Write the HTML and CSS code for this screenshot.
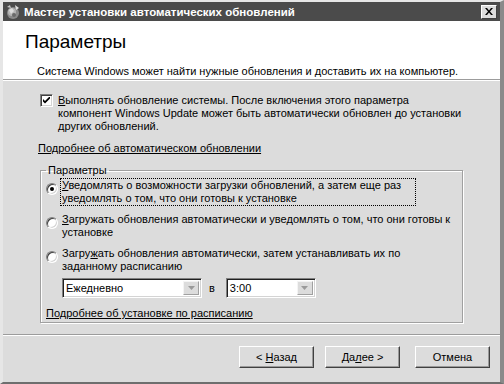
FILE: index.html
```html
<!DOCTYPE html>
<html lang="ru">
<head>
<meta charset="utf-8">
<link rel="stylesheet" href="styles.css">
</head>
<body>
<div class="window">
  <div class="titlebar">
    <svg class="appicon" width="16" height="16" viewBox="0 0 16 16">
      <circle cx="8" cy="9" r="6" fill="#8a8a8a"/>
      <circle cx="7" cy="8" r="4" fill="#b5b5b5"/>
      <path d="M4 6 L7 4 L9 7 L6 10 Z" fill="#dcdcdc"/>
      <path d="M10 1 L14 4 L11 6 Z" fill="#e0e0e0"/>
      <path d="M2 3 L5 1 L6 4 Z" fill="#c8c8c8"/>
      <circle cx="9" cy="11" r="2" fill="#6a6a6a"/>
    </svg>
    <span class="title">Мастер установки автоматических обновлений</span>
    <span class="close">
      <svg width="8" height="7" viewBox="0 0 8 7"><path d="M0 0h2l2 2.5 2-2.5h2L5 3.5 8 7H6L4 4.5 2 7H0l3-3.5z" fill="#000"/></svg>
    </span>
  </div>
  <div class="header">
    <h1 class="heading">Параметры</h1>
    <p class="desc">Система Windows может найти нужные обновления и доставить их на компьютер.</p>
  </div>
  <div class="content">
    <div class="check-row">
      <span class="checkbox">
        <svg width="7" height="7" viewBox="0 0 7 7"><path d="M0 2 L2 4 L7 -1 L7 1.5 L2 6.5 L0 4.5 Z" fill="#000"/></svg>
      </span>
      <span class="check-text"><u>В</u>ыполнять обновление системы. После включения этого параметра<br>компонент Windows Update может быть автоматически обновлен до установки<br>других обновлений.</span>
    </div>
    <a class="link link-auto">Подробнее об автоматическом обновлении</a>
    <fieldset class="group">
      <legend class="legend">Параметры</legend>
      <div class="radio-row">
        <span class="radio on"><span class="dot"></span></span>
        <span class="radio-text focus"><u>У</u>ведомлять о возможности загрузки обновлений, а затем еще раз уведомлять о том, что они готовы к установке</span>
      </div>
      <div class="radio-row">
        <span class="radio"></span>
        <span class="radio-text"><u>З</u>агружать обновления автоматически и уведомлять о том, что они готовы к установке</span>
      </div>
      <div class="radio-row">
        <span class="radio"></span>
        <span class="radio-text">Загру<u>ж</u>ать обновления автоматически, затем устанавливать их по заданному расписанию</span>
      </div>
      <div class="combo-row">
        <span class="combo combo-day"><span class="combo-value">Ежедневно</span><span class="combo-btn"><svg width="7" height="4" viewBox="0 0 7 4"><path d="M0 0h7L3.5 4z" fill="#9a9a9a"/></svg></span></span>
        <span class="at">в</span>
        <span class="combo combo-time"><span class="combo-value">3:00</span><span class="combo-btn"><svg width="7" height="4" viewBox="0 0 7 4"><path d="M0 0h7L3.5 4z" fill="#9a9a9a"/></svg></span></span>
      </div>
      <a class="link link-sched">Подробнее об установке по расписанию</a>
    </fieldset>
  </div>
  <div class="footer">
    <button class="btn"><span>&lt; <u>Н</u>азад</span></button>
    <button class="btn"><span>Да<u>л</u>ее &gt;</span></button>
    <button class="btn btn-cancel"><span>Отмена</span></button>
  </div>
</div>
</body>
</html>
```
FILE: styles.css
```css
* { box-sizing: border-box; }
html, body { margin: 0; padding: 0; }
body {
  width: 504px;
  height: 384px;
  background: #dcdcdc;
  font-family: "Liberation Sans", Arial, sans-serif;
  font-size: 11px;
  color: #000;
  overflow: hidden;
}
.window {
  width: 504px;
  height: 384px;
  display: flex;
  flex-direction: column;
  background: #dcdcdc;
  border-top: 2px solid #e6e6e6;
  border-left: 3px solid #e6e6e6;
  border-right: 4px solid #8a8a8a;
  border-bottom: 2px solid #6e6e6e;
}
.titlebar {
  height: 19px;
  flex: none;
  background: #4b4b4b;
  display: flex;
  align-items: center;
  padding: 0 3px 0 2px;
}
.appicon { flex: none; margin-right: 3px; }
.title {
  color: #fff;
  font-weight: bold;
  font-size: 11.5px;
  flex: 1;
  white-space: nowrap;
}
.close {
  width: 16px;
  height: 14px;
  background: #dcdcdc;
  border-top: 1px solid #fff;
  border-left: 1px solid #fff;
  border-right: 1px solid #404040;
  border-bottom: 1px solid #404040;
  display: flex;
  align-items: center;
  justify-content: center;
}
.header {
  height: 59px;
  flex: none;
  background: #fff;
  border-bottom: 1px solid #9c9c9c;
  box-shadow: 0 1px 0 #fff;
  padding: 9px 0 0 22px;
}
.heading {
  margin: 0;
  font-weight: normal;
  font-size: 19px;
  line-height: 24px;
}
.desc {
  margin: 11px 0 0 12px;
  line-height: 13px;
}
.content {
  flex: 1;
  padding: 14px 0 0 34px;
}
.check-row {
  display: flex;
  align-items: flex-start;
  padding-left: 3px;
  width: 440px;
}
.checkbox {
  flex: none;
  width: 13px;
  height: 13px;
  background: #fff;
  border-top: 1px solid #808080;
  border-left: 1px solid #808080;
  border-right: 1px solid #fff;
  border-bottom: 1px solid #fff;
  box-shadow: inset 1px 1px 0 #404040, inset -1px -1px 0 #d4d4d4;
  display: flex;
  align-items: center;
  justify-content: center;
}
.check-text {
  margin-left: 5px;
  line-height: 13px;
  white-space: nowrap;
}
.link {
  display: block;
  color: #000;
  text-decoration: underline;
  line-height: 13px;
  cursor: pointer;
}
.link-auto { margin-top: 9px; margin-left: 1px; }
.group {
  margin: 9px 0 0 3px;
  width: 423px;
  height: 159px;
  border: 1px solid #a0a0a0;
  box-shadow: 1px 1px 0 #fff, inset 1px 1px 0 #fff;
  padding: 2px 0 0 5px;
}
.legend {
  padding: 0 2px;
  margin-left: 0;
  line-height: 13px;
}
.radio-row {
  display: flex;
  align-items: flex-start;
  margin-bottom: 8px;
}
.radio {
  flex: none;
  width: 12px;
  height: 12px;
  border-radius: 50%;
  background: #fff;
  margin-top: 4px;
  border: 1px solid;
  border-color: #808080 #fff #fff #808080;
  box-shadow: inset 1px 1px 0 #404040, inset -1px -1px 0 #d4d4d4;
  display: flex;
  align-items: center;
  justify-content: center;
}
.dot {
  width: 4px;
  height: 4px;
  border-radius: 50%;
  background: #000;
}
.radio-text {
  margin-left: 3px;
  line-height: 13px;
  padding: 0 1px;
  width: 398px;
}
.radio-text.focus {
  width: 354px;
  outline: 1px dotted #000;
  outline-offset: 0;
}
.combo-row {
  display: flex;
  align-items: center;
  margin: -3px 0 0 16px;
}
.combo {
  height: 20px;
  display: flex;
  background: #fff;
  border-top: 1px solid #808080;
  border-left: 1px solid #808080;
  border-right: 1px solid #fff;
  border-bottom: 1px solid #fff;
  box-shadow: inset 1px 1px 0 #202020, inset -1px -1px 0 #d4d4d4;
  padding: 2px;
}
.combo-day { width: 140px; }
.combo-time { width: 90px; }
.combo-value {
  flex: 1;
  line-height: 14px;
  padding-left: 1px;
}
.combo-btn {
  width: 16px;
  flex: none;
  background: #dcdcdc;
  border-top: 1px solid #f4f4f4;
  border-left: 1px solid #f4f4f4;
  border-right: 1px solid #a0a0a0;
  border-bottom: 1px solid #a0a0a0;
  display: flex;
  align-items: center;
  justify-content: center;
}
.at { margin: 0 11px 0 7px; }
.link-sched { margin-top: 9px; margin-left: 0; }
.footer {
  flex: none;
  height: 48px;
  border-top: 1px solid #9c9c9c;
  box-shadow: inset 0 1px 0 #fff;
  display: flex;
  align-items: flex-start;
  justify-content: flex-end;
  padding: 11px 10px 0 0;
  gap: 11px;
}
.btn {
  width: 75px;
  height: 22px;
  font-family: inherit;
  font-size: 11px;
  background: #dcdcdc;
  border-top: 1px solid #fff;
  border-left: 1px solid #fff;
  border-right: 1px solid #404040;
  border-bottom: 1px solid #404040;
  box-shadow: inset -1px -1px 0 #9a9a9a;
  padding: 0;
  color: #000;
}
.btn-cancel { margin-left: 4px; }
```
